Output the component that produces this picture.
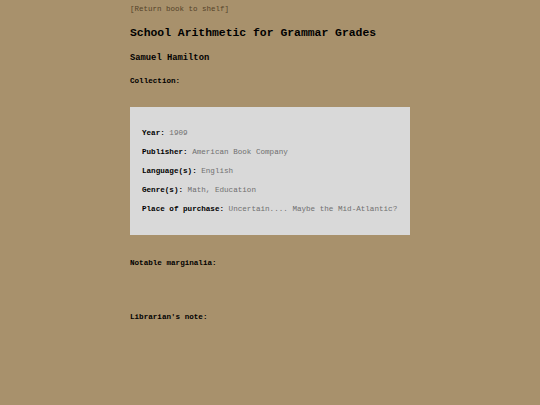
export default function App() {
  const rows = [
    ["Year:", "1909"],
    ["Publisher:", "American Book Company"],
    ["Language(s):", "English"],
    ["Genre(s):", "Math, Education"],
    ["Place of purchase:", "Uncertain.... Maybe the Mid-Atlantic?"],
  ];
  return (
    <div
      className="min-h-[405px] w-full bg-[#a8916c] text-black"
      style={{ fontFamily: '"Liberation Mono", "Courier New", monospace' }}
    >
      <div className="mx-auto w-[280px] pt-[1px]">
        <a className="block text-[7.5px] leading-[16px] text-[#55432a]">[Return book to shelf]</a>
        <h1 className="mt-[8px] text-[11.4px] font-bold leading-[16px]">
          School Arithmetic for Grammar Grades
        </h1>
        <h3 className="mt-[9px] text-[8.8px] font-bold leading-[16px]">Samuel Hamilton</h3>
        <h4 className="mt-[7px] text-[7.6px] font-bold leading-[16px]">Collection:</h4>
        <div className="mt-[18px] bg-[#d9d9d9] px-[12px] pt-[16.5px] pb-[16.5px]">
          {rows.map(([k, v]) => (
            <p key={k} className="text-[7.6px] leading-[19px] whitespace-nowrap">
              <span className="font-bold text-black">{k}</span>{" "}
              <span className="text-[#707070]">{v}</span>
            </p>
          ))}
        </div>
        <h4 className="mt-[20px] text-[7.6px] font-bold leading-[16px]">Notable marginalia:</h4>
        <h4 className="mt-[38px] text-[7.6px] font-bold leading-[16px]">Librarian's note:</h4>
      </div>
    </div>
  );
}
